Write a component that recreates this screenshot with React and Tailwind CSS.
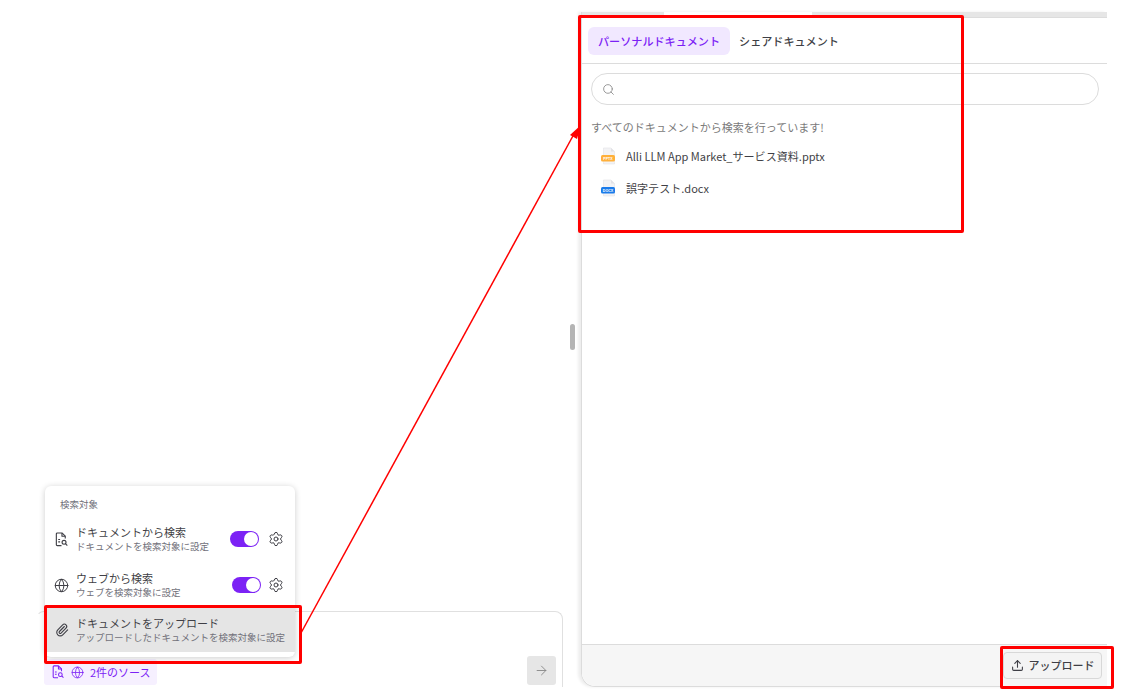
import React from "react";
import { Settings, Globe, Paperclip, Search, ArrowRight, Upload } from "lucide-react";

const DocSearch = ({ className }) => (
  <svg viewBox="0 0 16 16" fill="none" stroke="currentColor" strokeWidth="1.2" className={className}>
    <path d="M8 14.5H3.5a1 1 0 0 1-1-1V2a1 1 0 0 1 1-1h5l3.5 3.5v2.5" strokeLinejoin="round" />
    <path d="M8.5 1V4.5H12" strokeLinejoin="round" />
    <path d="M4.5 8h2M4.5 10.5h2" />
    <circle cx="10.7" cy="11" r="2.1" />
    <path d="M12.2 12.5l2 2" />
  </svg>
);

const FileIcon = ({ color, label }) => (
  <svg viewBox="0 0 18 18" className="w-[18px] h-[18px] shrink-0">
    <path d="M3.5 1h7.5l3.5 3.5V17h-11z" fill="#f3f3f5" stroke="#e2e2e6" strokeWidth="0.6" />
    <path d="M11 1v3.5h3.5" fill="#e2e2e6" />
    <rect x="1" y="8" width="14" height="6.5" rx="1.5" fill={color} />
    <text x="8" y="12.6" fontSize="3.6" fontWeight="700" fill="#fff" textAnchor="middle" fontFamily="'Liberation Sans', sans-serif">{label}</text>
  </svg>
);

const Toggle = () => (
  <div className="w-[29px] h-4 rounded-full bg-[#7c22f5] flex items-center justify-end pr-[1.5px] shrink-0">
    <div className="w-[14px] h-[14px] rounded-full bg-white" />
  </div>
);

const MenuRow = ({ icon, title, sub, gearClass }) => (
  <div className="flex items-center h-[46px] pl-[9px] pr-[11px]">
    <div className="w-[22px] flex justify-start shrink-0">{icon}</div>
    <div className="flex flex-col flex-1 min-w-0">
      <span className="text-[11px] leading-[15px] text-[#3f3f46]">{title}</span>
      <span className="text-[9.5px] leading-[13px] text-[#71717a]">{sub}</span>
    </div>
    <Toggle />
    <Settings className={"w-4 h-4 text-[#3f3f46] shrink-0 " + gearClass} strokeWidth={1.5} />
  </div>
);

const Box = ({ className }) => (
  <div className={"absolute border-[3px] border-[#f00] rounded-[2px] pointer-events-none " + className} />
);

export default function App() {
  return (
    <div
      className="relative w-[1136px] h-[698px] bg-white overflow-hidden flex"
      style={{ fontFamily: "'Noto Sans CJK JP', 'Noto Sans', sans-serif" }}
    >
      {/* left: chat column */}
      <div className="w-[570px] shrink-0 h-full flex flex-col justify-end pl-9 pb-[11px]">
        <div className="w-[527px] h-[76px] border border-b-0 border-[#e0e0e0] border-l-transparent rounded-t-[8px] flex items-end justify-between pl-2 pr-[6px] pb-[2px]">
          <div className="h-[26px] flex items-center bg-[#f6f0ff] rounded-[3px] pl-[7px] pr-[6px] text-[#7c22f5] -ml-[1px]">
            <DocSearch className="w-[14px] h-[14px]" />
            <Globe className="w-[13px] h-[13px] ml-[6px]" strokeWidth={1.5} />
            <span className="text-[11px] leading-none ml-[6px]">2件のソース</span>
          </div>
          <div className="w-[29px] h-[29px] rounded-[3px] bg-[#e6e6e6] flex items-center justify-center">
            <ArrowRight className="w-[15px] h-[15px] text-[#8a8a8a]" strokeWidth={1.5} />
          </div>
        </div>
      </div>

      {/* divider handle */}
      <div className="w-[11px] shrink-0 h-full flex items-center justify-start">
        <div className="w-[5px] h-[26px] rounded-[3px] bg-[#b4b4b4] mt-[-25px]" />
      </div>

      {/* right panel */}
      <div className="w-[526px] shrink-0 mt-3 mb-[11px] flex flex-col border-l border-b border-[#dcdcdc] rounded-bl-[14px] shadow-[-3px_0_3px_rgba(0,0,0,0.07)]">
        <div className="h-[6px] flex shrink-0">
          <div className="w-[82px] bg-[#e6e6e6]" />
          <div className="w-[148px]" />
          <div className="flex-1 bg-[#e6e6e6] border-b border-[#dcdcdc]" />
        </div>
        <div className="h-[46px] shrink-0 border-b border-[#dcdcdc] flex items-center pl-[6px] gap-[9px]">
          <div className="h-7 px-[10px] pt-[1px] rounded-[6px] bg-[#f1e8ff] text-[#7c22f5] text-[11.1px] font-medium flex items-center">パーソナルドキュメント</div>
          <div className="text-[11.1px] pt-[1px] font-medium text-[#3f3f46]">シェアドキュメント</div>
        </div>
        <div className="pl-[9px] pr-2 pt-[9px]">
          <div className="h-8 rounded-full border border-[#dcdcdc] flex items-center pl-[10px]">
            <Search className="w-[13px] h-[13px] text-[#8a8a8a]" strokeWidth={1.6} />
          </div>
        </div>
        <div className="pl-[9px] pt-[14px] text-[11px] leading-4 text-[#7a7a7a]">すべてのドキュメントから検索を行っています!</div>
        <div className="pl-[18px] pt-[12px] flex flex-col gap-[14px]">
          <div className="h-[18px] flex items-center gap-[8px] text-[11.05px] text-[#3f3f46]">
            <FileIcon color="#ffb03a" label="PPTX" />
            <span>Alli LLM App Market_サービス資料.pptx</span>
          </div>
          <div className="h-[18px] flex items-center gap-[8px] text-[11.05px] text-[#3f3f46]">
            <FileIcon color="#1a7bea" label="DOCX" />
            <span>誤字テスト.docx</span>
          </div>
        </div>
        <div className="flex-1" />
        <div className="h-[42px] shrink-0 bg-[#f6f6f6] border-t border-[#dcdcdc] rounded-bl-[14px] flex items-center justify-end pr-[5px]">
          <div className="h-[27px] w-[99px] bg-[#f4f4f4] border border-[#d8d8d8] rounded-[4px] flex items-center justify-center gap-[5px] text-[#3f3f46]">
            <Upload className="w-[13px] h-[13px]" strokeWidth={2} />
            <span className="text-[11px] font-medium">アップロード</span>
          </div>
        </div>
      </div>

      {/* popover menu */}
      <div className="absolute left-[45px] top-[486px] w-[250px] h-[171px] bg-white rounded-[6px] shadow-[0_1px_6px_rgba(0,0,0,0.2)] flex flex-col">
        <div className="text-[9.5px] leading-[14px] text-[#71717a] pl-[15px] pt-[11px] pb-[5px]">検索対象</div>
        <MenuRow
          icon={<DocSearch className="w-[15px] h-[15px] text-[#3f3f46]" />}
          title="ドキュメントから検索"
          sub="ドキュメントを検索対象に設定"
          gearClass="ml-[9px]"
        />
        <MenuRow
          icon={<Globe className="w-[15px] h-[15px] text-[#3f3f46]" strokeWidth={1.6} />}
          title="ウェブから検索"
          sub="ウェブを検索対象に設定"
          gearClass="ml-[7px]"
        />
        <div className="h-[44px] bg-[#e5e5e5] flex items-center pl-[10px]">
          <div className="w-[21px] shrink-0">
            <Paperclip className="w-[14px] h-[14px] text-[#3f3f46]" strokeWidth={1.9} />
          </div>
          <div className="flex flex-col">
            <span className="text-[11px] leading-[15px] text-[#3f3f46]">ドキュメントをアップロード</span>
            <span className="text-[9.5px] leading-[13px] text-[#71717a]">アップロードしたドキュメントを検索対象に設定</span>
          </div>
        </div>
      </div>

      {/* annotations */}
      <svg className="absolute inset-0 w-[1136px] h-[698px] pointer-events-none" viewBox="0 0 1136 698">
        <path d="M301 633L574 134" stroke="#f00" strokeWidth="1.5" fill="none" />
        <path d="M581 125L570 135L577 139z" fill="#f00" />
      </svg>
      <Box className="left-[578px] top-[15px] w-[386px] h-[218px]" />
      <Box className="left-[1000px] top-[646px] w-[114px] h-[43px]" />
      <Box className="left-[44px] top-[605px] w-[258px] h-[59px]" />
    </div>
  );
}
